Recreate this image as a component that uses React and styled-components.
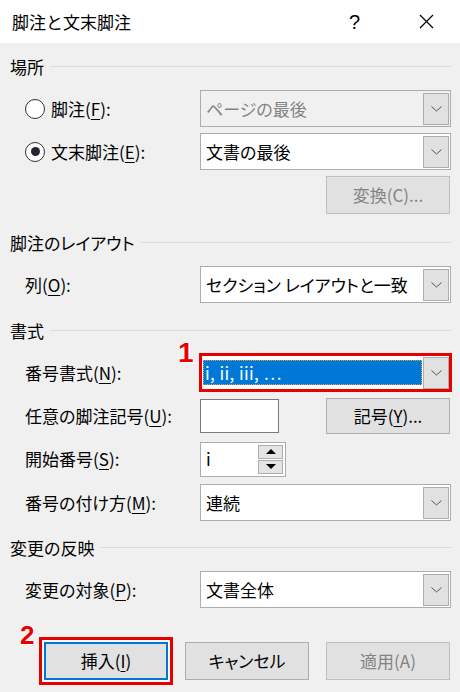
import React from 'react';
import styled, { createGlobalStyle } from 'styled-components';

/* global */
const GlobalStyle = createGlobalStyle`
  * { box-sizing: border-box; }
  html, body {
    margin: 0;
    padding: 0;
    background: #f0f0f0;
  }
  body {
    font-family: "Noto Sans CJK JP", "Noto Sans", sans-serif;
    font-size: 17px;
    font-feature-settings: "palt";
    color: #000;
  }
`;

/* dialog frame */
const Dialog = styled.div`
  width: 460px;
  height: 692px;
  background: #f0f0f0;
  overflow: hidden;
`;

const TitleBar = styled.div`
  height: 43px;
  background: #fff;
  display: flex;
  align-items: center;
  padding: 0 26px 0 12px;
`;

const Title = styled.div`
  flex: 1;
  line-height: 20px;
  font-feature-settings: normal;
`;

const TitleIcons = styled.div`
  display: flex;
  align-items: center;
  gap: 59px;
`;

const Help = styled.span`
  font-family: "Liberation Sans", Arial, sans-serif;
  font-size: 20px;
  line-height: 20px;
`;

const Content = styled.div`
  padding: 0 9px 0 10px;
`;

/* section */
const SectionHeader = styled.div`
  display: flex;
  align-items: center;
  gap: 6px;
  height: 20px;
  margin-top: ${(p) => p.$top}px;
  line-height: 20px;

  &::after {
    content: '';
    flex: 1;
    height: 1px;
    background: #dcdcdc;
    margin-top: -2px;
  }
`;

const Rows = styled.div`
  display: flex;
  flex-direction: column;
  gap: 6px;
  margin-top: 13px;
`;

const Row = styled.div`
  display: grid;
  grid-template-columns: 190px 1fr;
  height: ${(p) => p.$h}px;
  align-items: center;
`;

const Label = styled.div`
  display: flex;
  align-items: center;
  gap: 6px;
  padding-left: 15px;
  line-height: 20px;
  white-space: nowrap;
`;

const Mn = styled.span`
  text-decoration: underline;
  text-decoration-thickness: 1px;
  text-underline-offset: 3px;
`;

const Radio = styled.span`
  width: 20px;
  height: 20px;
  border-radius: 50%;
  border: 1px solid #333;
  background: #fff;
  display: flex;
  align-items: center;
  justify-content: center;

  &::after {
    content: '';
    width: 9px;
    height: 9px;
    border-radius: 50%;
    background: ${(p) => (p.$checked ? '#2a2230' : 'transparent')};
  }
`;

const Control = styled.div`
  position: relative;
  display: flex;
  align-items: center;
  justify-content: ${(p) => p.$justify || 'flex-start'};
  height: 100%;
`;

/* combo box */
const Combo = styled.div`
  flex: 1;
  height: 37px;
  display: flex;
  align-items: stretch;
  border: 1px solid #adadad;
  background: ${(p) => (p.$disabled ? '#f0f0f0' : '#fff')};
  color: ${(p) => (p.$disabled ? '#838383' : '#000')};
  outline: ${(p) => (p.$mark ? '3px solid #e60000' : 'none')};
  outline-offset: -2px;
`;

const ComboValue = styled.div`
  flex: 1;
  display: flex;
  align-items: center;
  line-height: 20px;
  white-space: nowrap;
  padding-left: 5px;

  &.selected {
    align-self: center;
    height: 25px;
    margin: 0 1px 0 2px;
    padding-left: 2px;
    background: #0078d7;
    color: #fff;
    letter-spacing: 0.4px;
    outline: 1px dotted #e8a040;
    outline-offset: -1px;
  }
`;

const ComboArrow = styled.div`
  width: 26px;
  margin: 2px 1px 1px 0;
  background: #e1e1e1;
  border: 1px solid #adadad;
  display: flex;
  align-items: center;
  justify-content: center;
`;

/* push buttons */
const Button = styled.div`
  width: 124px;
  height: ${(p) => p.$h || 38}px;
  display: flex;
  align-items: center;
  justify-content: center;
  line-height: 20px;
  background: #e1e1e1;
  border: ${(p) => (p.$default ? '2px solid #0078d7' : '1px solid #adadad')};
  border-color: ${(p) => (p.$disabled ? '#bfbfbf' : undefined)};
  color: ${(p) => (p.$disabled ? '#838383' : '#000')};
  margin-right: 1px;
  position: relative;

  &.marked {
    box-shadow: 0 0 0 2px #fff;
    outline: 3px solid #e60000;
    outline-offset: 2px;
  }
`;

/* text fields */
const TextBox = styled.div`
  width: 79px;
  height: 34px;
  background: #fff;
  border: 1px solid #7a7a7a;
`;

const Spinner = styled.div`
  width: 86px;
  height: 35px;
  background: #fff;
  border: 1px solid #adadad;
  display: flex;
  align-items: center;
  padding: 2px 2px 2px 5px;
`;

const SpinText = styled.div`
  flex: 1;
  line-height: 20px;
`;

const SpinButtons = styled.div`
  display: flex;
  flex-direction: column;
  gap: 1px;
  width: 25px;
  height: 100%;
`;

const SpinButton = styled.div`
  flex: 1;
  display: flex;
  align-items: center;
  justify-content: center;
  border: 1px solid #adadad;
  background-color: #e4e4e4;
  background-image: radial-gradient(#d2d2d2 0.6px, transparent 0.7px);
  background-size: 2px 2px;
`;

const Triangle = styled.span`
  width: 0;
  height: 0;
  border-left: 5px solid transparent;
  border-right: 5px solid transparent;
  ${(p) => (p.$down ? 'border-top: 5px solid #000;' : 'border-bottom: 5px solid #000;')}
`;

/* footer */
const Footer = styled.div`
  display: flex;
  justify-content: flex-end;
  gap: 16px;
  margin-top: 34px;
`;

/* red step numbers on the screenshot */
const Step = styled.span`
  position: absolute;
  font-family: "Liberation Sans", Arial, sans-serif;
  font-weight: 700;
  font-size: ${(p) => p.$size}px;
  line-height: 1;
  color: #e60000;
  text-shadow: -1px 0 #fff, 1px 0 #fff, 0 -1px #fff, 0 1px #fff;
  top: ${(p) => p.$top}px;
  left: ${(p) => p.$left}px;
`;

function Chevron() {
  return (
    <svg width="11" height="6" viewBox="0 0 11 6">
      <polyline points="0.5,0.5 5.5,5 10.5,0.5" fill="none" stroke="#555" strokeWidth="1" />
    </svg>
  );
}

function CloseIcon() {
  return (
    <svg width="15" height="15" viewBox="0 0 15 15">
      <path d="M1 1 L14 14 M14 1 L1 14" stroke="#000" strokeWidth="1.2" fill="none" />
    </svg>
  );
}

function Dropdown({ value, disabled, selected, mark }) {
  return (
    <Combo $disabled={disabled} $mark={mark}>
      <ComboValue className={selected ? 'selected' : null}>{value}</ComboValue>
      <ComboArrow>
        <Chevron />
      </ComboArrow>
    </Combo>
  );
}

function App() {
  return (
    <Dialog>
      <GlobalStyle />
      <TitleBar>
        <Title>脚注と文末脚注</Title>
        <TitleIcons>
          <Help>?</Help>
          <CloseIcon />
        </TitleIcons>
      </TitleBar>

      <Content>
        <SectionHeader $top={14}>場所</SectionHeader>
        <Rows>
          <Row $h={37}>
            <Label>
              <Radio />
              <span>脚注(<Mn>F</Mn>):</span>
            </Label>
            <Control>
              <Dropdown value="ページの最後" disabled />
            </Control>
          </Row>
          <Row $h={37}>
            <Label>
              <Radio $checked />
              <span>文末脚注(<Mn>E</Mn>):</span>
            </Label>
            <Control>
              <Dropdown value="文書の最後" />
            </Control>
          </Row>
          <Row $h={38}>
            <span />
            <Control $justify="flex-end">
              <Button $disabled>変換(C)...</Button>
            </Control>
          </Row>
        </Rows>

        <SectionHeader $top={19}>脚注のレイアウト</SectionHeader>
        <Rows>
          <Row $h={37}>
            <Label>
              <span>列(<Mn>O</Mn>):</span>
            </Label>
            <Control>
              <Dropdown value="セクション レイアウトと一致" />
            </Control>
          </Row>
        </Rows>

        <SectionHeader $top={18}>書式</SectionHeader>
        <Rows>
          <Row $h={37}>
            <Label>
              <span>番号書式(<Mn>N</Mn>):</span>
            </Label>
            <Control>
              <Step $size={28} $top={-15} $left={-22}>1</Step>
              <Dropdown value="i, ii, iii, …" selected mark />
            </Control>
          </Row>
          <Row $h={37}>
            <Label>
              <span>任意の脚注記号(<Mn>U</Mn>):</span>
            </Label>
            <Control $justify="space-between">
              <TextBox />
              <Button $h={36}>記号(<Mn>Y</Mn>)...</Button>
            </Control>
          </Row>
          <Row $h={38}>
            <Label>
              <span>開始番号(<Mn>S</Mn>):</span>
            </Label>
            <Control>
              <Spinner>
                <SpinText>i</SpinText>
                <SpinButtons>
                  <SpinButton>
                    <Triangle />
                  </SpinButton>
                  <SpinButton>
                    <Triangle $down />
                  </SpinButton>
                </SpinButtons>
              </Spinner>
            </Control>
          </Row>
          <Row $h={37}>
            <Label>
              <span>番号の付け方(<Mn>M</Mn>):</span>
            </Label>
            <Control>
              <Dropdown value="連続" />
            </Control>
          </Row>
        </Rows>

        <SectionHeader $top={17}>変更の反映</SectionHeader>
        <Rows>
          <Row $h={37}>
            <Label>
              <span>変更の対象(<Mn>P</Mn>):</span>
            </Label>
            <Control>
              <Dropdown value="文書全体" />
            </Control>
          </Row>
        </Rows>

        <Footer>
          <Button $default className="marked">
            <Step $size={26} $top={-22} $left={-26}>2</Step>
            挿入(<Mn>I</Mn>)
          </Button>
          <Button>キャンセル</Button>
          <Button $disabled>適用(A)</Button>
        </Footer>
      </Content>
    </Dialog>
  );
}

export default App;
